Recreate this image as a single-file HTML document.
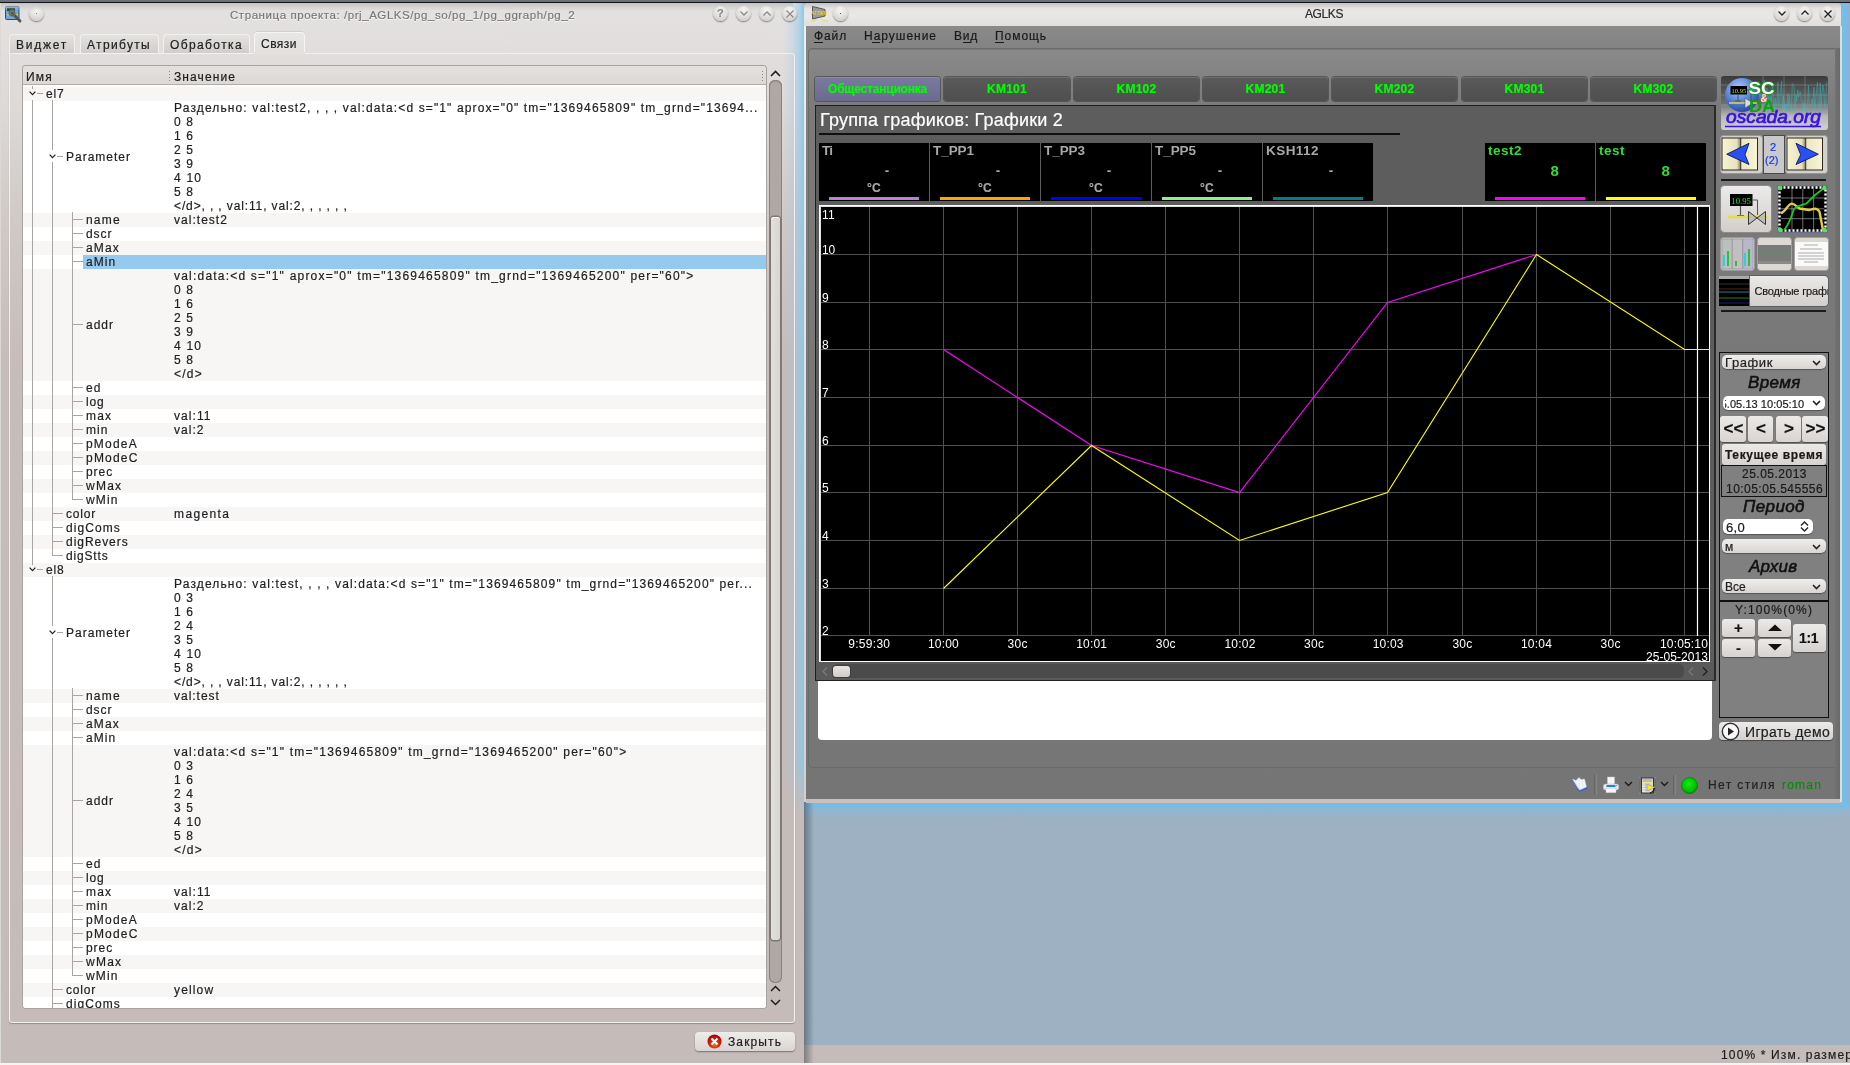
<!DOCTYPE html><html><head><meta charset="utf-8"><style>
*{box-sizing:border-box;margin:0;padding:0}
html,body{width:1850px;height:1065px;overflow:hidden;background:#9db1c2;font-family:"Liberation Sans",sans-serif;position:relative}
.a{position:absolute}
.t{position:absolute;white-space:pre;line-height:14px;font-size:12px;color:#1e1e1e;-webkit-text-stroke:0.2px currentColor}
.circ{position:absolute;width:15px;height:15px;border-radius:50%;background:radial-gradient(circle at 50% 30%,#f6f5f4 0%,#e2e0de 50%,#c4c0bc 100%);box-shadow:0 1px 1.5px rgba(0,0,0,.45)}
svg{position:absolute;overflow:visible}
</style></head><body><div id="root" style="position:absolute;left:0;top:0;width:1850px;height:1065px;will-change:transform">
<div class="a" style="left:0px;top:0px;width:1850px;height:2px;background:#6c7079"></div>
<div class="a" style="left:0px;top:2px;width:1850px;height:1px;background:#101214"></div>
<div class="a" style="left:804px;top:1045px;width:1046px;height:18px;background:#c5bcb9"></div>
<div class="a" style="left:0px;top:1063px;width:1850px;height:2px;background:#f4f4f4"></div>
<div class="t" style="left:1721px;top:1048px;font-size:12px;color:#1e1e1e;line-height:14px;letter-spacing:1.148px;">100% * Изм. размер</div>
<div class="a" style="left:1842px;top:3px;width:8px;height:800px;background:linear-gradient(90deg,#70c0ec,#88b4d6)"></div>
<div class="a" style="left:804px;top:803px;width:1046px;height:15px;background:linear-gradient(180deg,#70c0ec 0%,#8eb6d2 45%,#9db1c2 100%)"></div>
<div class="a" style="left:0px;top:3px;width:804px;height:1060px;background:linear-gradient(180deg,#e4e2e1 0px,#dddad8 100px,#d0c9c6 220px,#c6bdba 360px,#c5bcb9 100%);border-radius:4px 4px 0 0"></div>
<div class="a" style="left:0px;top:3px;width:1px;height:1060px;background:#dcd8d6"></div>
<div class="a" style="left:784px;top:3px;width:20px;height:812px;background:linear-gradient(90deg,rgba(140,200,235,0) 0%,rgba(140,200,235,.25) 45%,rgba(140,200,235,.6) 80%,#88c8ee 100%);-webkit-mask-image:linear-gradient(180deg,#000 0,#000 760px,transparent 812px)"></div>
<div class="a" style="left:794px;top:1045px;width:10px;height:18px;background:#c5bcb9"></div>
<div class="a" style="left:804px;top:802px;width:10px;height:261px;background:linear-gradient(90deg,rgba(40,50,60,.45),rgba(40,50,60,0))"></div>
<svg style="left:5px;top:6px" width="17" height="17" viewBox="0 0 17 17">
<rect x="0.5" y="0.5" width="13.5" height="13" rx="1" fill="#6fa6dc" stroke="#2a4e7a"/>
<rect x="2" y="2" width="8" height="3" fill="#0c3a10"/><rect x="2" y="8" width="11" height="1.5" fill="#c8c840"/>
<path d="M7 7 L15 15" stroke="#555" stroke-width="3" stroke-linecap="round"/>
<circle cx="7" cy="7" r="2.6" fill="none" stroke="#666" stroke-width="1.6"/>
</svg>
<div class="circ" style="left:29px;top:6px"></div>
<div class="a" style="left:36px;top:13px;width:1px;height:1px;background:#888"></div>
<div class="a" style="left:1px;top:3px;width:792px;height:8px;background:linear-gradient(180deg,#c4c4c4,rgba(232,230,229,0))"></div>
<div class="t" style="left:230px;top:7.5px;font-size:11.5px;color:#7a7777;line-height:14px;letter-spacing:0.563px;text-shadow:0 1px 1px #fff">Страница проекта: /prj_AGLKS/pg_so/pg_1/pg_ggraph/pg_2</div>
<div class="circ" style="left:713.0px;top:6px"></div>
<div class="t" style="left:717.0px;top:6px;font-size:11px;color:#8a8a8a;line-height:14px;font-weight:bold;">?</div>
<div class="circ" style="left:736.0px;top:6px"></div>
<svg style="left:739.5px;top:11px" width="8" height="5"><path d="M0.5 0.5 L4 4 L7.5 0.5" fill="none" stroke="#8a8a8a" stroke-width="1.3"/></svg>
<div class="circ" style="left:759.0px;top:6px"></div>
<svg style="left:762.5px;top:11px" width="8" height="5"><path d="M0.5 4.5 L4 1 L7.5 4.5" fill="none" stroke="#8a8a8a" stroke-width="1.3"/></svg>
<div class="circ" style="left:782.0px;top:6px"></div>
<svg style="left:785.5px;top:10px" width="8" height="8"><path d="M0.5 0.5 L7.5 7.5 M7.5 0.5 L0.5 7.5" fill="none" stroke="#8a8a8a" stroke-width="1.2"/></svg>
<div class="a" style="left:9px;top:34px;width:66px;height:20px;background:linear-gradient(180deg,#e4e2e0,#d0ccc9);border:1px solid #f2f0ef;border-bottom:none;border-radius:4px 4px 0 0"></div>
<div class="t" style="left:16px;top:38px;font-size:12px;color:#1e1e1e;line-height:14px;letter-spacing:1.747px;">Виджет</div>
<div class="a" style="left:80px;top:34px;width:79px;height:20px;background:linear-gradient(180deg,#e4e2e0,#d0ccc9);border:1px solid #f2f0ef;border-bottom:none;border-radius:4px 4px 0 0"></div>
<div class="t" style="left:87px;top:38px;font-size:12px;color:#1e1e1e;line-height:14px;letter-spacing:1.332px;">Атрибуты</div>
<div class="a" style="left:163px;top:34px;width:87px;height:20px;background:linear-gradient(180deg,#e4e2e0,#d0ccc9);border:1px solid #f2f0ef;border-bottom:none;border-radius:4px 4px 0 0"></div>
<div class="t" style="left:170px;top:38px;font-size:12px;color:#1e1e1e;line-height:14px;letter-spacing:1.387px;">Обработка</div>
<div class="a" style="left:254px;top:32px;width:51px;height:22px;background:linear-gradient(180deg,#e9e7e6,#e2dfdd);border:1px solid #f6f5f4;border-bottom:none;border-radius:4px 4px 0 0;box-shadow:0 -1px 0 rgba(0,0,0,.08)"></div>
<div class="t" style="left:261px;top:37px;font-size:12px;color:#1e1e1e;line-height:14px;letter-spacing:0.478px;">Связи</div>
<div class="a" style="left:9px;top:53px;width:786px;height:970px;border:1px solid #f3f1f0;border-radius:3px;box-shadow:0 1px 1px rgba(0,0,0,.25)"></div>
<div class="a" style="left:254px;top:52px;width:51px;height:3px;background:#e3e0de"></div>
<div class="a" style="left:23px;top:66px;width:743px;height:942px;background:#fff;border-radius:3px;box-shadow:0 0 0 1px #aaa4a0, inset 0 1px 1px rgba(0,0,0,.2)"></div>
<div class="a" style="left:23px;top:66px;width:743px;height:20px;background:linear-gradient(180deg,#e3e0de,#dcd8d5);border-radius:3px 3px 0 0;border-bottom:1px solid #fafafa;box-shadow:inset 0 -1px 0 #b4aeaa"></div>
<div class="t" style="left:26px;top:70px;font-size:12px;color:#1e1e1e;line-height:14px;letter-spacing:1.208px;">Имя</div>
<div class="t" style="left:174px;top:70px;font-size:12px;color:#1e1e1e;line-height:14px;letter-spacing:1.100px;">Значение</div>
<div class="a" style="left:169px;top:71px;width:1px;height:1px;background:#8a8683"></div>
<div class="a" style="left:762px;top:71px;width:1px;height:1px;background:#8a8683"></div>
<div class="a" style="left:169px;top:74px;width:1px;height:1px;background:#8a8683"></div>
<div class="a" style="left:762px;top:74px;width:1px;height:1px;background:#8a8683"></div>
<div class="a" style="left:169px;top:77px;width:1px;height:1px;background:#8a8683"></div>
<div class="a" style="left:762px;top:77px;width:1px;height:1px;background:#8a8683"></div>
<div class="a" style="left:169px;top:80px;width:1px;height:1px;background:#8a8683"></div>
<div class="a" style="left:762px;top:80px;width:1px;height:1px;background:#8a8683"></div>
<div class="a" style="left:23px;top:86px;width:743px;height:922px;overflow:hidden;border-radius:0 0 3px 3px">
<div class="a" style="left:0px;top:1px;width:743px;height:14px;background:#f7f6f5"></div>
<div class="a" style="left:0px;top:15px;width:743px;height:112px;background:#ffffff"></div>
<div class="a" style="left:0px;top:127px;width:743px;height:14px;background:#f7f6f5"></div>
<div class="a" style="left:0px;top:141px;width:743px;height:14px;background:#ffffff"></div>
<div class="a" style="left:0px;top:155px;width:743px;height:14px;background:#f7f6f5"></div>
<div class="a" style="left:0px;top:169px;width:743px;height:14px;background:#ffffff"></div>
<div class="a" style="left:60px;top:169px;width:683px;height:14px;background:#95c9ee"></div>
<div class="a" style="left:0px;top:183px;width:743px;height:112px;background:#f7f6f5"></div>
<div class="a" style="left:0px;top:295px;width:743px;height:14px;background:#ffffff"></div>
<div class="a" style="left:0px;top:309px;width:743px;height:14px;background:#f7f6f5"></div>
<div class="a" style="left:0px;top:323px;width:743px;height:14px;background:#ffffff"></div>
<div class="a" style="left:0px;top:337px;width:743px;height:14px;background:#f7f6f5"></div>
<div class="a" style="left:0px;top:351px;width:743px;height:14px;background:#ffffff"></div>
<div class="a" style="left:0px;top:365px;width:743px;height:14px;background:#f7f6f5"></div>
<div class="a" style="left:0px;top:379px;width:743px;height:14px;background:#ffffff"></div>
<div class="a" style="left:0px;top:393px;width:743px;height:14px;background:#f7f6f5"></div>
<div class="a" style="left:0px;top:407px;width:743px;height:14px;background:#ffffff"></div>
<div class="a" style="left:0px;top:421px;width:743px;height:14px;background:#f7f6f5"></div>
<div class="a" style="left:0px;top:435px;width:743px;height:14px;background:#ffffff"></div>
<div class="a" style="left:0px;top:449px;width:743px;height:14px;background:#f7f6f5"></div>
<div class="a" style="left:0px;top:463px;width:743px;height:14px;background:#ffffff"></div>
<div class="a" style="left:0px;top:477px;width:743px;height:14px;background:#f7f6f5"></div>
<div class="a" style="left:0px;top:491px;width:743px;height:112px;background:#ffffff"></div>
<div class="a" style="left:0px;top:603px;width:743px;height:14px;background:#f7f6f5"></div>
<div class="a" style="left:0px;top:617px;width:743px;height:14px;background:#ffffff"></div>
<div class="a" style="left:0px;top:631px;width:743px;height:14px;background:#f7f6f5"></div>
<div class="a" style="left:0px;top:645px;width:743px;height:14px;background:#ffffff"></div>
<div class="a" style="left:0px;top:659px;width:743px;height:112px;background:#f7f6f5"></div>
<div class="a" style="left:0px;top:771px;width:743px;height:14px;background:#ffffff"></div>
<div class="a" style="left:0px;top:785px;width:743px;height:14px;background:#f7f6f5"></div>
<div class="a" style="left:0px;top:799px;width:743px;height:14px;background:#ffffff"></div>
<div class="a" style="left:0px;top:813px;width:743px;height:14px;background:#f7f6f5"></div>
<div class="a" style="left:0px;top:827px;width:743px;height:14px;background:#ffffff"></div>
<div class="a" style="left:0px;top:841px;width:743px;height:14px;background:#f7f6f5"></div>
<div class="a" style="left:0px;top:855px;width:743px;height:14px;background:#ffffff"></div>
<div class="a" style="left:0px;top:869px;width:743px;height:14px;background:#f7f6f5"></div>
<div class="a" style="left:0px;top:883px;width:743px;height:14px;background:#ffffff"></div>
<div class="a" style="left:0px;top:897px;width:743px;height:14px;background:#f7f6f5"></div>
<div class="a" style="left:0px;top:911px;width:743px;height:14px;background:#ffffff"></div>
<div class="a" style="left:0px;top:925px;width:743px;height:14px;background:#f7f6f5"></div>
<div class="a" style="left:0px;top:939px;width:743px;height:14px;background:#ffffff"></div>
<div class="a" style="left:9px;top:14px;width:1px;height:465px;background:#aaa5a1"></div>
<div class="a" style="left:9px;top:0px;width:1px;height:3px;background:#aaa5a1"></div>
<div class="a" style="left:29px;top:14px;width:1px;height:456px;background:#aaa5a1"></div>
<div class="a" style="left:34px;top:70px;width:6px;height:1px;background:#aaa5a1"></div>
<div class="a" style="left:30px;top:427px;width:10px;height:1px;background:#aaa5a1"></div>
<div class="a" style="left:30px;top:441px;width:10px;height:1px;background:#aaa5a1"></div>
<div class="a" style="left:30px;top:455px;width:10px;height:1px;background:#aaa5a1"></div>
<div class="a" style="left:30px;top:469px;width:10px;height:1px;background:#aaa5a1"></div>
<div class="a" style="left:49px;top:126px;width:1px;height:288px;background:#aaa5a1"></div>
<div class="a" style="left:50px;top:133px;width:10px;height:1px;background:#aaa5a1"></div>
<div class="a" style="left:50px;top:147px;width:10px;height:1px;background:#aaa5a1"></div>
<div class="a" style="left:50px;top:161px;width:10px;height:1px;background:#aaa5a1"></div>
<div class="a" style="left:50px;top:175px;width:10px;height:1px;background:#aaa5a1"></div>
<div class="a" style="left:50px;top:238px;width:10px;height:1px;background:#aaa5a1"></div>
<div class="a" style="left:50px;top:301px;width:10px;height:1px;background:#aaa5a1"></div>
<div class="a" style="left:50px;top:315px;width:10px;height:1px;background:#aaa5a1"></div>
<div class="a" style="left:50px;top:329px;width:10px;height:1px;background:#aaa5a1"></div>
<div class="a" style="left:50px;top:343px;width:10px;height:1px;background:#aaa5a1"></div>
<div class="a" style="left:50px;top:357px;width:10px;height:1px;background:#aaa5a1"></div>
<div class="a" style="left:50px;top:371px;width:10px;height:1px;background:#aaa5a1"></div>
<div class="a" style="left:50px;top:385px;width:10px;height:1px;background:#aaa5a1"></div>
<div class="a" style="left:50px;top:399px;width:10px;height:1px;background:#aaa5a1"></div>
<div class="a" style="left:50px;top:413px;width:10px;height:1px;background:#aaa5a1"></div>
<div class="a" style="left:14px;top:7px;width:6px;height:1px;background:#aaa5a1"></div>
<div class="a" style="left:29px;top:490px;width:1px;height:456px;background:#aaa5a1"></div>
<div class="a" style="left:34px;top:546px;width:6px;height:1px;background:#aaa5a1"></div>
<div class="a" style="left:30px;top:903px;width:10px;height:1px;background:#aaa5a1"></div>
<div class="a" style="left:30px;top:917px;width:10px;height:1px;background:#aaa5a1"></div>
<div class="a" style="left:30px;top:931px;width:10px;height:1px;background:#aaa5a1"></div>
<div class="a" style="left:30px;top:945px;width:10px;height:1px;background:#aaa5a1"></div>
<div class="a" style="left:49px;top:602px;width:1px;height:288px;background:#aaa5a1"></div>
<div class="a" style="left:50px;top:609px;width:10px;height:1px;background:#aaa5a1"></div>
<div class="a" style="left:50px;top:623px;width:10px;height:1px;background:#aaa5a1"></div>
<div class="a" style="left:50px;top:637px;width:10px;height:1px;background:#aaa5a1"></div>
<div class="a" style="left:50px;top:651px;width:10px;height:1px;background:#aaa5a1"></div>
<div class="a" style="left:50px;top:714px;width:10px;height:1px;background:#aaa5a1"></div>
<div class="a" style="left:50px;top:777px;width:10px;height:1px;background:#aaa5a1"></div>
<div class="a" style="left:50px;top:791px;width:10px;height:1px;background:#aaa5a1"></div>
<div class="a" style="left:50px;top:805px;width:10px;height:1px;background:#aaa5a1"></div>
<div class="a" style="left:50px;top:819px;width:10px;height:1px;background:#aaa5a1"></div>
<div class="a" style="left:50px;top:833px;width:10px;height:1px;background:#aaa5a1"></div>
<div class="a" style="left:50px;top:847px;width:10px;height:1px;background:#aaa5a1"></div>
<div class="a" style="left:50px;top:861px;width:10px;height:1px;background:#aaa5a1"></div>
<div class="a" style="left:50px;top:875px;width:10px;height:1px;background:#aaa5a1"></div>
<div class="a" style="left:50px;top:889px;width:10px;height:1px;background:#aaa5a1"></div>
<div class="a" style="left:14px;top:483px;width:6px;height:1px;background:#aaa5a1"></div>
<svg style="left:6px;top:5px" width="8" height="5"><path d="M0.6 0.6 L3.5 3.6 L6.4 0.6" fill="none" stroke="#222" stroke-width="1.25"/></svg>
<div class="t" style="left:23px;top:1px;font-size:12px;color:#1e1e1e;letter-spacing:0.8541666666666662px">el7</div>
<div class="a" style="left:29px;top:64px;width:1px;height:12px;background:#fff"></div>
<svg style="left:26px;top:68px" width="8" height="5"><path d="M0.6 0.6 L3.5 3.6 L6.4 0.6" fill="none" stroke="#222" stroke-width="1.25"/></svg>
<div class="t" style="left:43px;top:64px;font-size:12px;color:#1e1e1e;letter-spacing:0.9958333333333328px">Parameter</div>
<div class="t" style="left:151px;top:15px;font-size:12px;color:#1e1e1e;letter-spacing:1.1261439606741577px">Раздельно: val:test2, , , , val:data:&lt;d s="1" aprox="0" tm="1369465809" tm_grnd="13694...</div>
<div class="t" style="left:151px;top:29px;font-size:12px;color:#1e1e1e;letter-spacing:1.1503593750000005px">0 8</div>
<div class="t" style="left:151px;top:43px;font-size:12px;color:#1e1e1e;letter-spacing:1.1503593750000005px">1 6</div>
<div class="t" style="left:151px;top:57px;font-size:12px;color:#1e1e1e;letter-spacing:1.1503593750000005px">2 5</div>
<div class="t" style="left:151px;top:71px;font-size:12px;color:#1e1e1e;letter-spacing:1.1503593750000005px">3 9</div>
<div class="t" style="left:151px;top:85px;font-size:12px;color:#1e1e1e;letter-spacing:1.2080390625000004px">4 10</div>
<div class="t" style="left:151px;top:99px;font-size:12px;color:#1e1e1e;letter-spacing:1.1503593750000005px">5 8</div>
<div class="t" style="left:151px;top:113px;font-size:12px;color:#1e1e1e;letter-spacing:0.8750886948529415px">&lt;/d&gt;, , , val:11, val:2, , , , , ,</div>
<div class="t" style="left:63px;top:127px;font-size:12px;color:#1e1e1e;letter-spacing:1.2006249999999994px">name</div>
<div class="t" style="left:151px;top:127px;font-size:12px;color:#1e1e1e;letter-spacing:1.0274531250000003px">val:test2</div>
<div class="t" style="left:63px;top:141px;font-size:12px;color:#1e1e1e;letter-spacing:0.9068749999999995px">dscr</div>
<div class="t" style="left:63px;top:155px;font-size:12px;color:#1e1e1e;letter-spacing:1.1737499999999994px">aMax</div>
<div class="t" style="left:63px;top:169px;font-size:12px;color:#1e1e1e;letter-spacing:1.0406249999999995px">aMin</div>
<div class="t" style="left:63px;top:232px;font-size:12px;color:#1e1e1e;letter-spacing:0.9606249999999995px">addr</div>
<div class="t" style="left:151px;top:183px;font-size:12px;color:#1e1e1e;letter-spacing:1.2063344594594598px">val:data:&lt;d s="1" aprox="0" tm="1369465809" tm_grnd="1369465200" per="60"&gt;</div>
<div class="t" style="left:151px;top:197px;font-size:12px;color:#1e1e1e;letter-spacing:1.1503593750000005px">0 8</div>
<div class="t" style="left:151px;top:211px;font-size:12px;color:#1e1e1e;letter-spacing:1.1503593750000005px">1 6</div>
<div class="t" style="left:151px;top:225px;font-size:12px;color:#1e1e1e;letter-spacing:1.1503593750000005px">2 5</div>
<div class="t" style="left:151px;top:239px;font-size:12px;color:#1e1e1e;letter-spacing:1.1503593750000005px">3 9</div>
<div class="t" style="left:151px;top:253px;font-size:12px;color:#1e1e1e;letter-spacing:1.2080390625000004px">4 10</div>
<div class="t" style="left:151px;top:267px;font-size:12px;color:#1e1e1e;letter-spacing:1.1503593750000005px">5 8</div>
<div class="t" style="left:151px;top:281px;font-size:12px;color:#1e1e1e;letter-spacing:1.2436171875000004px">&lt;/d&gt;</div>
<div class="t" style="left:63px;top:295px;font-size:12px;color:#1e1e1e;letter-spacing:1.0674999999999994px">ed</div>
<div class="t" style="left:63px;top:309px;font-size:12px;color:#1e1e1e;letter-spacing:0.8541666666666662px">log</div>
<div class="t" style="left:63px;top:323px;font-size:12px;color:#1e1e1e;letter-spacing:1.209166666666666px">max</div>
<div class="t" style="left:151px;top:323px;font-size:12px;color:#1e1e1e;letter-spacing:1.0738125000000005px">val:11</div>
<div class="t" style="left:63px;top:337px;font-size:12px;color:#1e1e1e;letter-spacing:1.031666666666666px">min</div>
<div class="t" style="left:151px;top:337px;font-size:12px;color:#1e1e1e;letter-spacing:1.0492312500000005px">val:2</div>
<div class="t" style="left:63px;top:351px;font-size:12px;color:#1e1e1e;letter-spacing:1.1916666666666662px">pModeA</div>
<div class="t" style="left:63px;top:365px;font-size:12px;color:#1e1e1e;letter-spacing:1.2095833333333328px">pModeC</div>
<div class="t" style="left:63px;top:379px;font-size:12px;color:#1e1e1e;letter-spacing:0.9337499999999995px">prec</div>
<div class="t" style="left:63px;top:393px;font-size:12px;color:#1e1e1e;letter-spacing:1.2537499999999995px">wMax</div>
<div class="t" style="left:63px;top:407px;font-size:12px;color:#1e1e1e;letter-spacing:1.1206249999999995px">wMin</div>
<div class="t" style="left:43px;top:421px;font-size:12px;color:#1e1e1e;letter-spacing:0.8324999999999996px">color</div>
<div class="t" style="left:151px;top:421px;font-size:12px;color:#1e1e1e;letter-spacing:1.3806160714285718px">magenta</div>
<div class="t" style="left:43px;top:435px;font-size:12px;color:#1e1e1e;letter-spacing:1.0824999999999994px">digComs</div>
<div class="t" style="left:43px;top:449px;font-size:12px;color:#1e1e1e;letter-spacing:0.9605555555555552px">digRevers</div>
<div class="t" style="left:43px;top:463px;font-size:12px;color:#1e1e1e;letter-spacing:0.8382142857142852px">digStts</div>
<svg style="left:6px;top:481px" width="8" height="5"><path d="M0.6 0.6 L3.5 3.6 L6.4 0.6" fill="none" stroke="#222" stroke-width="1.25"/></svg>
<div class="t" style="left:23px;top:477px;font-size:12px;color:#1e1e1e;letter-spacing:0.8541666666666662px">el8</div>
<div class="a" style="left:29px;top:540px;width:1px;height:12px;background:#fff"></div>
<svg style="left:26px;top:544px" width="8" height="5"><path d="M0.6 0.6 L3.5 3.6 L6.4 0.6" fill="none" stroke="#222" stroke-width="1.25"/></svg>
<div class="t" style="left:43px;top:540px;font-size:12px;color:#1e1e1e;letter-spacing:0.9958333333333328px">Parameter</div>
<div class="t" style="left:151px;top:491px;font-size:12px;color:#1e1e1e;letter-spacing:1.128135298295455px">Раздельно: val:test, , , , val:data:&lt;d s="1" tm="1369465809" tm_grnd="1369465200" per...</div>
<div class="t" style="left:151px;top:505px;font-size:12px;color:#1e1e1e;letter-spacing:1.1503593750000005px">0 3</div>
<div class="t" style="left:151px;top:519px;font-size:12px;color:#1e1e1e;letter-spacing:1.1503593750000005px">1 6</div>
<div class="t" style="left:151px;top:533px;font-size:12px;color:#1e1e1e;letter-spacing:1.1503593750000005px">2 4</div>
<div class="t" style="left:151px;top:547px;font-size:12px;color:#1e1e1e;letter-spacing:1.1503593750000005px">3 5</div>
<div class="t" style="left:151px;top:561px;font-size:12px;color:#1e1e1e;letter-spacing:1.2080390625000004px">4 10</div>
<div class="t" style="left:151px;top:575px;font-size:12px;color:#1e1e1e;letter-spacing:1.1503593750000005px">5 8</div>
<div class="t" style="left:151px;top:589px;font-size:12px;color:#1e1e1e;letter-spacing:0.8750886948529415px">&lt;/d&gt;, , , val:11, val:2, , , , , ,</div>
<div class="t" style="left:63px;top:603px;font-size:12px;color:#1e1e1e;letter-spacing:1.2006249999999994px">name</div>
<div class="t" style="left:151px;top:603px;font-size:12px;color:#1e1e1e;letter-spacing:0.9832500000000004px">val:test</div>
<div class="t" style="left:63px;top:617px;font-size:12px;color:#1e1e1e;letter-spacing:0.9068749999999995px">dscr</div>
<div class="t" style="left:63px;top:631px;font-size:12px;color:#1e1e1e;letter-spacing:1.1737499999999994px">aMax</div>
<div class="t" style="left:63px;top:645px;font-size:12px;color:#1e1e1e;letter-spacing:1.0406249999999995px">aMin</div>
<div class="t" style="left:63px;top:708px;font-size:12px;color:#1e1e1e;letter-spacing:0.9606249999999995px">addr</div>
<div class="t" style="left:151px;top:659px;font-size:12px;color:#1e1e1e;letter-spacing:1.2151142578125005px">val:data:&lt;d s="1" tm="1369465809" tm_grnd="1369465200" per="60"&gt;</div>
<div class="t" style="left:151px;top:673px;font-size:12px;color:#1e1e1e;letter-spacing:1.1503593750000005px">0 3</div>
<div class="t" style="left:151px;top:687px;font-size:12px;color:#1e1e1e;letter-spacing:1.1503593750000005px">1 6</div>
<div class="t" style="left:151px;top:701px;font-size:12px;color:#1e1e1e;letter-spacing:1.1503593750000005px">2 4</div>
<div class="t" style="left:151px;top:715px;font-size:12px;color:#1e1e1e;letter-spacing:1.1503593750000005px">3 5</div>
<div class="t" style="left:151px;top:729px;font-size:12px;color:#1e1e1e;letter-spacing:1.2080390625000004px">4 10</div>
<div class="t" style="left:151px;top:743px;font-size:12px;color:#1e1e1e;letter-spacing:1.1503593750000005px">5 8</div>
<div class="t" style="left:151px;top:757px;font-size:12px;color:#1e1e1e;letter-spacing:1.2436171875000004px">&lt;/d&gt;</div>
<div class="t" style="left:63px;top:771px;font-size:12px;color:#1e1e1e;letter-spacing:1.0674999999999994px">ed</div>
<div class="t" style="left:63px;top:785px;font-size:12px;color:#1e1e1e;letter-spacing:0.8541666666666662px">log</div>
<div class="t" style="left:63px;top:799px;font-size:12px;color:#1e1e1e;letter-spacing:1.209166666666666px">max</div>
<div class="t" style="left:151px;top:799px;font-size:12px;color:#1e1e1e;letter-spacing:1.0738125000000005px">val:11</div>
<div class="t" style="left:63px;top:813px;font-size:12px;color:#1e1e1e;letter-spacing:1.031666666666666px">min</div>
<div class="t" style="left:151px;top:813px;font-size:12px;color:#1e1e1e;letter-spacing:1.0492312500000005px">val:2</div>
<div class="t" style="left:63px;top:827px;font-size:12px;color:#1e1e1e;letter-spacing:1.1916666666666662px">pModeA</div>
<div class="t" style="left:63px;top:841px;font-size:12px;color:#1e1e1e;letter-spacing:1.2095833333333328px">pModeC</div>
<div class="t" style="left:63px;top:855px;font-size:12px;color:#1e1e1e;letter-spacing:0.9337499999999995px">prec</div>
<div class="t" style="left:63px;top:869px;font-size:12px;color:#1e1e1e;letter-spacing:1.2537499999999995px">wMax</div>
<div class="t" style="left:63px;top:883px;font-size:12px;color:#1e1e1e;letter-spacing:1.1206249999999995px">wMin</div>
<div class="t" style="left:43px;top:897px;font-size:12px;color:#1e1e1e;letter-spacing:0.8324999999999996px">color</div>
<div class="t" style="left:151px;top:897px;font-size:12px;color:#1e1e1e;letter-spacing:1.1508984375000004px">yellow</div>
<div class="t" style="left:43px;top:911px;font-size:12px;color:#1e1e1e;letter-spacing:1.0824999999999994px">digComs</div>
<div class="t" style="left:43px;top:925px;font-size:12px;color:#1e1e1e;letter-spacing:0.9605555555555552px">digRevers</div>
<div class="t" style="left:43px;top:939px;font-size:12px;color:#1e1e1e;letter-spacing:0.8382142857142852px">digStts</div>
</div>
<svg style="left:770px;top:70px" width="11" height="7"><path d="M1 6 L5.5 1.5 L10 6" fill="none" stroke="#1e1e1e" stroke-width="1.6"/></svg>
<div class="a" style="left:769px;top:80px;width:13px;height:903px;background:#b0a8a5;border-radius:6px;box-shadow:inset 0 0 0 1px #8a8380, inset 0 1px 2px rgba(0,0,0,.25)"></div>
<div class="a" style="left:771px;top:217px;width:9px;height:723px;background:linear-gradient(90deg,#e2dfdc,#dedad7 50%,#d8d4d1);border-radius:3px;box-shadow:0 0 0 1.5px #7e7774, inset 0 1px 0 #fff"></div>
<svg style="left:770px;top:985px" width="11" height="7"><path d="M1 6 L5.5 1.5 L10 6" fill="none" stroke="#1e1e1e" stroke-width="1.5"/></svg>
<svg style="left:770px;top:999px" width="11" height="7"><path d="M1 1 L5.5 5.5 L10 1" fill="none" stroke="#1e1e1e" stroke-width="1.5"/></svg>
<div class="a" style="left:695px;top:1032px;width:100px;height:19px;background:linear-gradient(180deg,#eeecea,#d9d5d2);border-radius:4px;box-shadow:0 1px 1.5px rgba(0,0,0,.4)"></div>
<svg style="left:707px;top:1034px" width="15" height="15" viewBox="0 0 15 15">
<defs><radialGradient id="rg1" cx="50%" cy="70%" r="60%"><stop offset="0" stop-color="#f07a10"/><stop offset=".6" stop-color="#d42010"/><stop offset="1" stop-color="#a80808"/></radialGradient></defs>
<circle cx="7.5" cy="7.5" r="7" fill="url(#rg1)"/><path d="M4.5 4.5 L10.5 10.5 M10.5 4.5 L4.5 10.5" stroke="#fff" stroke-width="2"/></svg>
<div class="t" style="left:728px;top:1035px;font-size:12px;color:#1e1e1e;line-height:14px;letter-spacing:1.112px;">Закрыть</div>
<div class="a" style="left:804px;top:3px;width:1037px;height:799px;background:#c5bcb9;border-radius:4px 4px 0 0"></div>
<div class="a" style="left:804px;top:3px;width:1037px;height:24px;background:linear-gradient(180deg,#c4c4c4 0px,#e6e5e4 6px,#e9e8e7 12px,#e0dedc 100%);border-radius:4px 4px 0 0"></div>
<svg style="left:811px;top:5px" width="18" height="17" viewBox="0 0 18 17">
<path d="M1.5 1.5 L14 4.5 L14 11 L1.5 14 Z" fill="#9a9a9a" stroke="#555" stroke-width="1"/>
<text x="0" y="10" font-family="Liberation Sans" font-size="5" fill="#e8d020" font-weight="bold">AГЛКС</text>
<path d="M0 16 L4 16 L5 14 M11 14 L12 16 L17 16" stroke="#e8e040" fill="none" stroke-width="1"/>
</svg>
<div class="circ" style="left:833px;top:6px"></div>
<div class="a" style="left:840px;top:13px;width:1px;height:1px;background:#555"></div>
<div class="t" style="left:1305px;top:7px;font-size:12px;color:#2a2a2a;line-height:14px;letter-spacing:-0.400px;">AGLKS</div>
<div class="circ" style="left:1774.0px;top:6px"></div>
<svg style="left:1777.5px;top:11px" width="8" height="5"><path d="M0.5 0.5 L4 4 L7.5 0.5" fill="none" stroke="#222" stroke-width="1.3"/></svg>
<div class="circ" style="left:1797.0px;top:6px"></div>
<svg style="left:1800.5px;top:10px" width="8" height="5"><path d="M0.5 4.5 L4 1 L7.5 4.5" fill="none" stroke="#222" stroke-width="1.3"/></svg>
<div class="circ" style="left:1820.0px;top:6px"></div>
<svg style="left:1823.5px;top:9.5px" width="8" height="8"><path d="M0.5 0.5 L7.5 7.5 M7.5 0.5 L0.5 7.5" fill="none" stroke="#222" stroke-width="1.3"/></svg>
<div class="a" style="left:806px;top:26px;width:1034px;height:773px;background:linear-gradient(180deg,#888888 0px,#828282 60px,#777777 400px,#757575 100%)"></div>
<div class="a" style="left:804px;top:26px;width:2px;height:776px;background:linear-gradient(180deg,#f2eeec,#d6cecb)"></div>
<div class="a" style="left:806px;top:26px;width:1034px;height:22px;background:linear-gradient(180deg,#8a8a8a,#838383)"></div>
<div class="t" style="left:814px;top:29px;font-size:12px;color:#1a1a1a;line-height:14px;letter-spacing:0.875px;">Файл</div>
<div class="a" style="left:814px;top:42px;width:9px;height:1px;background:#1a1a1a"></div>
<div class="t" style="left:864px;top:29px;font-size:12px;color:#1a1a1a;line-height:14px;letter-spacing:0.981px;">Нарушение</div>
<div class="a" style="left:872px;top:42px;width:8px;height:1px;background:#1a1a1a"></div>
<div class="t" style="left:954px;top:29px;font-size:12px;color:#1a1a1a;line-height:14px;letter-spacing:0.766px;">Вид</div>
<div class="a" style="left:963px;top:42px;width:8px;height:1px;background:#1a1a1a"></div>
<div class="t" style="left:995px;top:29px;font-size:12px;color:#1a1a1a;line-height:14px;letter-spacing:0.943px;">Помощь</div>
<div class="a" style="left:995px;top:42px;width:9px;height:1px;background:#1a1a1a"></div>
<div class="a" style="left:808px;top:48px;width:1030px;height:720px;background:linear-gradient(180deg,#8a8a8a 0px,#848484 22px,#7a7a7a 60px,#767676 100%);border-radius:4px;border:1px solid #6a6a6a;box-shadow:inset 0 1px 0 #7a7a7a"></div>
<div class="a" style="left:815px;top:77px;width:125px;height:24px;background:linear-gradient(180deg,#7a7aa0,#6c6a90);border-radius:3px;box-shadow:0 0 0 1px rgba(60,60,60,.6), inset 0 1px 0 rgba(255,255,255,.12)"></div>
<div class="t" style="left:828.0px;top:82px;font-size:12px;color:#00ff00;line-height:14px;letter-spacing:-0.203px;font-weight:bold;">Общестанционка</div>
<div class="a" style="left:944px;top:77px;width:126px;height:24px;background:linear-gradient(180deg,#5a5a5a,#4e4e4e);border-radius:3px;box-shadow:0 0 0 1px rgba(60,60,60,.6), inset 0 1px 0 rgba(255,255,255,.12)"></div>
<div class="t" style="left:987.0px;top:82px;font-size:12px;color:#00ff00;line-height:14px;letter-spacing:0.263px;font-weight:bold;">KM101</div>
<div class="a" style="left:1074px;top:77px;width:125px;height:24px;background:linear-gradient(180deg,#5a5a5a,#4e4e4e);border-radius:3px;box-shadow:0 0 0 1px rgba(60,60,60,.6), inset 0 1px 0 rgba(255,255,255,.12)"></div>
<div class="t" style="left:1116.5px;top:82px;font-size:12px;color:#00ff00;line-height:14px;letter-spacing:0.263px;font-weight:bold;">KM102</div>
<div class="a" style="left:1203px;top:77px;width:125px;height:24px;background:linear-gradient(180deg,#5a5a5a,#4e4e4e);border-radius:3px;box-shadow:0 0 0 1px rgba(60,60,60,.6), inset 0 1px 0 rgba(255,255,255,.12)"></div>
<div class="t" style="left:1245.5px;top:82px;font-size:12px;color:#00ff00;line-height:14px;letter-spacing:0.263px;font-weight:bold;">KM201</div>
<div class="a" style="left:1332px;top:77px;width:125px;height:24px;background:linear-gradient(180deg,#5a5a5a,#4e4e4e);border-radius:3px;box-shadow:0 0 0 1px rgba(60,60,60,.6), inset 0 1px 0 rgba(255,255,255,.12)"></div>
<div class="t" style="left:1374.5px;top:82px;font-size:12px;color:#00ff00;line-height:14px;letter-spacing:0.263px;font-weight:bold;">KM202</div>
<div class="a" style="left:1462px;top:77px;width:125px;height:24px;background:linear-gradient(180deg,#5a5a5a,#4e4e4e);border-radius:3px;box-shadow:0 0 0 1px rgba(60,60,60,.6), inset 0 1px 0 rgba(255,255,255,.12)"></div>
<div class="t" style="left:1504.5px;top:82px;font-size:12px;color:#00ff00;line-height:14px;letter-spacing:0.263px;font-weight:bold;">KM301</div>
<div class="a" style="left:1591px;top:77px;width:125px;height:24px;background:linear-gradient(180deg,#5a5a5a,#4e4e4e);border-radius:3px;box-shadow:0 0 0 1px rgba(60,60,60,.6), inset 0 1px 0 rgba(255,255,255,.12)"></div>
<div class="t" style="left:1633.5px;top:82px;font-size:12px;color:#00ff00;line-height:14px;letter-spacing:0.263px;font-weight:bold;">KM302</div>
<div class="a" style="left:815px;top:105px;width:900px;height:576px;background:#5d5d5d;box-shadow:inset 0 0 0 1px #1e1e1e"></div>
<div class="t" style="left:820px;top:110px;font-size:18px;color:#ffffff;line-height:20px;letter-spacing:0.201px;">Группа графиков: Графики 2</div>
<div class="a" style="left:819px;top:133px;width:581px;height:2px;background:#101010"></div>
<div class="a" style="left:819px;top:143px;width:110px;height:58px;background:#000"></div>
<div class="t" style="left:822px;top:143.5px;font-size:13.5px;color:#a8a8a8;line-height:14px;letter-spacing:-0.875px;font-weight:bold;-webkit-text-stroke:0">Ti</div>
<div class="t" style="left:885px;top:164px;font-size:12px;color:#a8a8a8;line-height:14px;font-weight:bold;">-</div>
<div class="t" style="left:867px;top:181px;font-size:12px;color:#a8a8a8;line-height:14px;letter-spacing:0.266px;font-weight:bold;">°C</div>
<div class="a" style="left:829px;top:197px;width:90px;height:3px;background:#bb80d8"></div>
<div class="a" style="left:930px;top:143px;width:110px;height:58px;background:#000"></div>
<div class="t" style="left:933px;top:143.5px;font-size:13.5px;color:#a8a8a8;line-height:14px;letter-spacing:-0.056px;font-weight:bold;-webkit-text-stroke:0">T_PP1</div>
<div class="t" style="left:996px;top:164px;font-size:12px;color:#a8a8a8;line-height:14px;font-weight:bold;">-</div>
<div class="t" style="left:978px;top:181px;font-size:12px;color:#a8a8a8;line-height:14px;letter-spacing:0.266px;font-weight:bold;">°C</div>
<div class="a" style="left:940px;top:197px;width:90px;height:3px;background:#ffa500"></div>
<div class="a" style="left:1041px;top:143px;width:110px;height:58px;background:#000"></div>
<div class="t" style="left:1044px;top:143.5px;font-size:13.5px;color:#a8a8a8;line-height:14px;letter-spacing:-0.056px;font-weight:bold;-webkit-text-stroke:0">T_PP3</div>
<div class="t" style="left:1107px;top:164px;font-size:12px;color:#a8a8a8;line-height:14px;font-weight:bold;">-</div>
<div class="t" style="left:1089px;top:181px;font-size:12px;color:#a8a8a8;line-height:14px;letter-spacing:0.266px;font-weight:bold;">°C</div>
<div class="a" style="left:1051px;top:197px;width:90px;height:3px;background:#0000ff"></div>
<div class="a" style="left:1152px;top:143px;width:110px;height:58px;background:#000"></div>
<div class="t" style="left:1155px;top:143.5px;font-size:13.5px;color:#a8a8a8;line-height:14px;letter-spacing:-0.056px;font-weight:bold;-webkit-text-stroke:0">T_PP5</div>
<div class="t" style="left:1218px;top:164px;font-size:12px;color:#a8a8a8;line-height:14px;font-weight:bold;">-</div>
<div class="t" style="left:1200px;top:181px;font-size:12px;color:#a8a8a8;line-height:14px;letter-spacing:0.266px;font-weight:bold;">°C</div>
<div class="a" style="left:1162px;top:197px;width:90px;height:3px;background:#90ee90"></div>
<div class="a" style="left:1263px;top:143px;width:110px;height:58px;background:#000"></div>
<div class="t" style="left:1266px;top:143.5px;font-size:13.5px;color:#a8a8a8;line-height:14px;letter-spacing:0.451px;font-weight:bold;-webkit-text-stroke:0">KSH112</div>
<div class="t" style="left:1329px;top:164px;font-size:12px;color:#a8a8a8;line-height:14px;font-weight:bold;">-</div>
<div class="a" style="left:1273px;top:197px;width:90px;height:3px;background:#008080"></div>
<div class="a" style="left:1485px;top:143px;width:110px;height:58px;background:#000"></div>
<div class="t" style="left:1488px;top:143.5px;font-size:13.5px;color:#33dd33;line-height:14px;letter-spacing:0.491px;font-weight:bold;-webkit-text-stroke:0">test2</div>
<div class="t" style="left:1550.5px;top:163px;font-size:15px;color:#33dd33;line-height:16px;font-weight:bold;-webkit-text-stroke:0">8</div>
<div class="a" style="left:1495px;top:197px;width:90px;height:3px;background:#ff00ff"></div>
<div class="a" style="left:1596px;top:143px;width:110px;height:58px;background:#000"></div>
<div class="t" style="left:1599px;top:143.5px;font-size:13.5px;color:#33dd33;line-height:14px;letter-spacing:0.492px;font-weight:bold;-webkit-text-stroke:0">test</div>
<div class="t" style="left:1661.5px;top:163px;font-size:15px;color:#33dd33;line-height:16px;font-weight:bold;-webkit-text-stroke:0">8</div>
<div class="a" style="left:1606px;top:197px;width:90px;height:3px;background:#ffff00"></div>
<div class="a" style="left:819px;top:205px;width:891px;height:457px;background:#000;box-shadow:inset 1px 1px 0 #fff, inset 2px 2px 0 #e0e0e0, inset -1px -1px 0 #fff"></div>
<div class="a" style="left:0;top:0;width:1850px;height:1065px;overflow:hidden;pointer-events:none"><svg style="left:0;top:0" width="1850" height="1065" viewBox="0 0 1850 1065"><line x1="869.5" y1="207" x2="869.5" y2="636" stroke="#505050" stroke-width="1"/><line x1="943.5" y1="207" x2="943.5" y2="636" stroke="#505050" stroke-width="1"/><line x1="1017.5" y1="207" x2="1017.5" y2="636" stroke="#505050" stroke-width="1"/><line x1="1091.5" y1="207" x2="1091.5" y2="636" stroke="#505050" stroke-width="1"/><line x1="1165.5" y1="207" x2="1165.5" y2="636" stroke="#505050" stroke-width="1"/><line x1="1239.5" y1="207" x2="1239.5" y2="636" stroke="#505050" stroke-width="1"/><line x1="1313.5" y1="207" x2="1313.5" y2="636" stroke="#505050" stroke-width="1"/><line x1="1387.5" y1="207" x2="1387.5" y2="636" stroke="#505050" stroke-width="1"/><line x1="1462.5" y1="207" x2="1462.5" y2="636" stroke="#505050" stroke-width="1"/><line x1="1536.5" y1="207" x2="1536.5" y2="636" stroke="#505050" stroke-width="1"/><line x1="1610.5" y1="207" x2="1610.5" y2="636" stroke="#505050" stroke-width="1"/><line x1="1684.5" y1="207" x2="1684.5" y2="636" stroke="#505050" stroke-width="1"/><line x1="821" y1="635.5" x2="1709" y2="635.5" stroke="#505050" stroke-width="1"/><line x1="821" y1="588.5" x2="1709" y2="588.5" stroke="#505050" stroke-width="1"/><line x1="821" y1="540.5" x2="1709" y2="540.5" stroke="#505050" stroke-width="1"/><line x1="821" y1="492.5" x2="1709" y2="492.5" stroke="#505050" stroke-width="1"/><line x1="821" y1="445.5" x2="1709" y2="445.5" stroke="#505050" stroke-width="1"/><line x1="821" y1="397.5" x2="1709" y2="397.5" stroke="#505050" stroke-width="1"/><line x1="821" y1="349.5" x2="1709" y2="349.5" stroke="#505050" stroke-width="1"/><line x1="821" y1="302.5" x2="1709" y2="302.5" stroke="#505050" stroke-width="1"/><line x1="821" y1="254.5" x2="1709" y2="254.5" stroke="#505050" stroke-width="1"/><line x1="1697.5" y1="207" x2="1697.5" y2="636" stroke="#fff" stroke-width="1.2"/><polyline points="943.5,349.5 1091.5,445.5 1239.5,492.5 1387.5,302.5 1536.5,254.5" fill="none" stroke="#ff00ff" stroke-width="1.1"/><polyline points="943.5,588.5 1091.5,445.5 1239.5,540.5 1387.5,492.5 1536.5,254.5 1684.5,349.5 1709,349.5" fill="none" stroke="#ffff00" stroke-width="1.1"/></svg></div>
<div class="t" style="left:822px;top:623.5px;font-size:12px;color:#fff;line-height:14px;letter-spacing:-0.172px;-webkit-text-stroke:0">2</div>
<div class="t" style="left:822px;top:576.5px;font-size:12px;color:#fff;line-height:14px;letter-spacing:-0.172px;-webkit-text-stroke:0">3</div>
<div class="t" style="left:822px;top:528.5px;font-size:12px;color:#fff;line-height:14px;letter-spacing:-0.172px;-webkit-text-stroke:0">4</div>
<div class="t" style="left:822px;top:480.5px;font-size:12px;color:#fff;line-height:14px;letter-spacing:-0.172px;-webkit-text-stroke:0">5</div>
<div class="t" style="left:822px;top:433.5px;font-size:12px;color:#fff;line-height:14px;letter-spacing:-0.172px;-webkit-text-stroke:0">6</div>
<div class="t" style="left:822px;top:385.5px;font-size:12px;color:#fff;line-height:14px;letter-spacing:-0.172px;-webkit-text-stroke:0">7</div>
<div class="t" style="left:822px;top:337.5px;font-size:12px;color:#fff;line-height:14px;letter-spacing:-0.172px;-webkit-text-stroke:0">8</div>
<div class="t" style="left:822px;top:290.5px;font-size:12px;color:#fff;line-height:14px;letter-spacing:-0.172px;-webkit-text-stroke:0">9</div>
<div class="t" style="left:822px;top:242.5px;font-size:12px;color:#fff;line-height:14px;letter-spacing:-0.172px;-webkit-text-stroke:0">10</div>
<div class="t" style="left:822px;top:208px;font-size:12px;color:#fff;line-height:14px;letter-spacing:0.273px;-webkit-text-stroke:0">11</div>
<div class="t" style="left:848.3px;top:637px;font-size:12px;color:#fff;line-height:14px;letter-spacing:0.283px;-webkit-text-stroke:0">9:59:30</div>
<div class="t" style="left:927.9px;top:637px;font-size:12px;color:#fff;line-height:14px;letter-spacing:0.197px;-webkit-text-stroke:0">10:00</div>
<div class="t" style="left:1007.6px;top:637px;font-size:12px;color:#fff;line-height:14px;letter-spacing:0.219px;-webkit-text-stroke:0">30c</div>
<div class="t" style="left:1076.2px;top:637px;font-size:12px;color:#fff;line-height:14px;letter-spacing:0.197px;-webkit-text-stroke:0">10:01</div>
<div class="t" style="left:1155.8px;top:637px;font-size:12px;color:#fff;line-height:14px;letter-spacing:0.219px;-webkit-text-stroke:0">30c</div>
<div class="t" style="left:1224.5px;top:637px;font-size:12px;color:#fff;line-height:14px;letter-spacing:0.197px;-webkit-text-stroke:0">10:02</div>
<div class="t" style="left:1304.1px;top:637px;font-size:12px;color:#fff;line-height:14px;letter-spacing:0.219px;-webkit-text-stroke:0">30c</div>
<div class="t" style="left:1372.7px;top:637px;font-size:12px;color:#fff;line-height:14px;letter-spacing:0.197px;-webkit-text-stroke:0">10:03</div>
<div class="t" style="left:1452.4px;top:637px;font-size:12px;color:#fff;line-height:14px;letter-spacing:0.219px;-webkit-text-stroke:0">30c</div>
<div class="t" style="left:1521.0px;top:637px;font-size:12px;color:#fff;line-height:14px;letter-spacing:0.197px;-webkit-text-stroke:0">10:04</div>
<div class="t" style="left:1600.6px;top:637px;font-size:12px;color:#fff;line-height:14px;letter-spacing:0.219px;-webkit-text-stroke:0">30c</div>
<div class="t" style="left:1660px;top:637px;font-size:12px;color:#fff;line-height:14px;letter-spacing:0.164px;-webkit-text-stroke:0">10:05:10</div>
<div class="t" style="left:1646px;top:650px;font-size:12px;color:#fff;line-height:14px;letter-spacing:0.062px;-webkit-text-stroke:0">25-05-2013</div>
<div class="a" style="left:816px;top:662px;width:898px;height:18px;background:#5a5a5a"></div>
<div class="a" style="left:833px;top:664px;width:851px;height:14px;background:#4b4b4b;border-radius:5px"></div>
<div class="a" style="left:833px;top:666px;width:17px;height:11px;background:linear-gradient(180deg,#e8e6e4,#cfcbc8);border-radius:3px;box-shadow:0 0 0 1px #3e3e3e"></div>
<svg style="left:822px;top:667px" width="6" height="9"><path d="M5 0.5 L1 4.5 L5 8.5" fill="none" stroke="#7a7a7a" stroke-width="1.3"/></svg>
<svg style="left:1688px;top:667px" width="6" height="9"><path d="M5 0.5 L1 4.5 L5 8.5" fill="none" stroke="#777" stroke-width="1.3"/></svg>
<svg style="left:1702px;top:667px" width="6" height="9"><path d="M1 0.5 L5 4.5 L1 8.5" fill="none" stroke="#222" stroke-width="1.3"/></svg>
<div class="a" style="left:815px;top:680px;width:900px;height:1px;background:#222"></div>
<div class="a" style="left:818px;top:681px;width:894px;height:59px;background:#fff;border-radius:0 0 4px 4px"></div>
<div class="a" style="left:1714px;top:105px;width:2px;height:576px;background:#2a2a2a"></div>
<svg style="left:1721px;top:76px" width="107" height="54" viewBox="0 0 107 54">
<defs>
<linearGradient id="lg" x1="0" y1="0" x2="0" y2="1"><stop offset="0" stop-color="#3a3a3a"/><stop offset=".5" stop-color="#6a6e6e"/><stop offset=".75" stop-color="#b8baba"/><stop offset="1" stop-color="#d0d0d0"/></linearGradient>
<radialGradient id="glb" cx="40%" cy="30%" r="70%"><stop offset="0" stop-color="#b0c8f4"/><stop offset=".55" stop-color="#5a86d8"/><stop offset="1" stop-color="#2a4ca8"/></radialGradient>
</defs>
<rect x="0" y="0" width="107" height="54" rx="3" fill="url(#lg)"/>
<path d="M0 9 H107 M0 19 H107 M0 29 H107 M0 39 H107 M42 0 V54 M63 0 V54 M84 0 V54" stroke="#b0b4b4" stroke-width=".5" opacity=".7"/>
<polyline points="38.0,12.1 38.9,22.5 39.8,16.6 40.7,24.5 41.6,25.3 42.5,6.2 43.4,4.4 44.3,32.5 45.2,12.8 46.1,12.0 47.0,37.9 47.9,20.0 48.8,32.4 49.7,20.2 50.6,25.7 51.5,9.1 52.4,25.6 53.3,33.5 54.2,21.8 55.1,29.2 56.0,26.8 56.9,6.2 57.8,29.8 58.7,24.1 59.6,14.2 60.5,5.1 61.4,33.4 62.3,20.1 63.2,28.4 64.1,33.9 65.0,28.3 65.9,35.3 66.8,17.4 67.7,31.2 68.6,19.1 69.5,35.8 70.4,33.9 71.3,7.3 72.2,8.6 73.1,11.4 74.0,36.8 74.9,18.8 75.8,25.3 76.7,14.2 77.6,21.2 78.5,17.1 79.4,15.9 80.3,23.9 81.2,23.9 82.1,34.7 83.0,27.2 83.9,35.6 84.8,33.1 85.7,37.7 86.6,26.8 87.5,9.5 88.4,33.3 89.3,36.8 90.2,34.8 91.1,23.3 92.0,28.3 92.9,11.2 93.8,32.3 94.7,23.5 95.6,13.7 96.5,6.2 97.4,33.0 98.3,37.7 99.2,7.0 100.1,31.2 101.0,18.0 101.9,9.1 102.8,14.0 103.7,30.1 104.6,33.7 105.5,5.5" fill="none" stroke="#30c0c0" stroke-width=".6" opacity=".7"/>
<circle cx="21" cy="19" r="17" fill="url(#glb)"/>
<rect x="9.5" y="10" width="16.5" height="8.5" fill="#000"/><text x="10.5" y="16.8" font-size="6.5" fill="#b0e040" font-family="Liberation Serif">10.95</text>
<path d="M17 18.5 V25 M14 25 H20 M26 14 H30 V26" stroke="#444" stroke-width=".8" fill="none"/>
<path d="M8 27 H36" stroke="#e0d040" stroke-width="1.6"/>
<path d="M24 22 L32 27 L24 32 Z" fill="#d8dce8" stroke="#555" stroke-width=".6"/>
<text x="27.5" y="18" font-size="17" font-weight="bold" font-family="Liberation Sans" fill="#ffffff" stroke="#10a010" stroke-width="1.6" paint-order="stroke" textLength="26" lengthAdjust="spacingAndGlyphs">SC</text>
<text x="39.5" y="26" font-size="10" font-weight="bold" font-family="Liberation Sans" fill="#ffe0d0" stroke="#d07050" stroke-width=".5" paint-order="stroke">&amp;</text>
<text x="28" y="36" font-size="17" font-weight="bold" font-family="Liberation Sans" fill="#10a010" textLength="26" lengthAdjust="spacingAndGlyphs">DA</text>
<text x="5" y="47" font-size="17.5" font-style="italic" font-family="Liberation Sans" fill="#3a10e8" stroke="#3a10e8" stroke-width=".7" textLength="95" lengthAdjust="spacingAndGlyphs">oscada.org</text>
<path d="M4 50.5 H100" stroke="#3a10e8" stroke-width="1.6"/>
</svg>
<svg style="left:1720px;top:135px" width="43" height="39" viewBox="0 0 43 39">
<defs><linearGradient id="bk1720" x1="0" y1="0" x2="1" y2="0"><stop offset="0" stop-color="#f8f4d4"/><stop offset=".42" stop-color="#e8e2bc"/><stop offset=".5" stop-color="#9a9478"/><stop offset=".52" stop-color="#4a4638"/><stop offset=".56" stop-color="#ece6c4"/><stop offset="1" stop-color="#f8f4d4"/></linearGradient></defs>
<rect x="0.5" y="0.5" width="42" height="38" rx="3" fill="#d4d0cc" stroke="#9a9692"/>
<rect x="2" y="3" width="35.5" height="32" fill="url(#bk1720)" stroke="#2a2820" stroke-width="1"/>
<path d="M6.7 19.2 L29 8.3 L25 19.7 L29 29.5 Z" fill="#2a50f0" stroke="#0a1a60" stroke-width=".9"/>
</svg>
<svg style="left:1785px;top:135px" width="43" height="39" viewBox="0 0 43 39">
<defs><linearGradient id="bk1785" x1="0" y1="0" x2="1" y2="0"><stop offset="0" stop-color="#f8f4d4"/><stop offset=".42" stop-color="#e8e2bc"/><stop offset=".5" stop-color="#9a9478"/><stop offset=".52" stop-color="#4a4638"/><stop offset=".56" stop-color="#ece6c4"/><stop offset="1" stop-color="#f8f4d4"/></linearGradient></defs>
<rect x="0.5" y="0.5" width="42" height="38" rx="3" fill="#d4d0cc" stroke="#9a9692"/>
<rect x="2" y="3" width="35.5" height="32" fill="url(#bk1785)" stroke="#2a2820" stroke-width="1"/>
<path d="M33.3 19.2 L11 8.3 L15.7 19.7 L11 29.5 Z" fill="#2a50f0" stroke="#0a1a60" stroke-width=".9"/>
</svg>
<div class="a" style="left:1763px;top:135px;width:22px;height:39px;background:#c9c9c9;border:1px solid #4a4a4a"></div>
<div class="t" style="left:1770px;top:141px;font-size:11px;color:#1a3ae0;line-height:13px;">2</div>
<div class="t" style="left:1765px;top:154px;font-size:11px;color:#1a3ae0;line-height:13px;">(2)</div>
<div class="a" style="left:1721px;top:179px;width:105px;height:2px;background:#1a1a1a"></div>
<svg style="left:1720px;top:185px" width="52" height="48" viewBox="0 0 52 48">
<defs><linearGradient id="ib1" x1="0" y1="0" x2="0" y2="1"><stop offset="0" stop-color="#ecebea"/><stop offset="1" stop-color="#d2cecb"/></linearGradient></defs>
<rect x="0.5" y="0.5" width="51" height="47" rx="4" fill="url(#ib1)" stroke="#8e8a86"/>
<rect x="10" y="9" width="22.5" height="12" fill="#000"/><text x="11.3" y="18.6" font-size="8.6" fill="#30e030" font-family="Liberation Serif" textLength="19.5" lengthAdjust="spacingAndGlyphs">10.95</text>
<path d="M32.5 15 H37.5 V30" stroke="#555" stroke-width="1" fill="none"/>
<path d="M20.5 21 V30 M17 30.5 H24" stroke="#555" stroke-width="1.2" fill="none"/>
<path d="M8 32 H48" stroke="#e4e040" stroke-width="2.6"/>
<path d="M28.5 26.5 L28.5 39.5 L37 33 Z M45.5 26.5 L45.5 39.5 L37 33 Z" fill="#b4b4b4" fill-opacity=".7" stroke="#333" stroke-width="1"/>
</svg>
<svg style="left:1777px;top:185px" width="51" height="48" viewBox="0 0 51 48">
<rect x="0" y="0" width="51" height="48" rx="2" fill="#6e6e90"/>
<rect x="2.5" y="2.5" width="46" height="43" fill="#000" stroke="#111" stroke-width="2.4"/><rect x="2.5" y="2.5" width="46" height="43" fill="none" stroke="#fff" stroke-width="2.4" stroke-dasharray="2 2"/>
<path d="M15 4 V45 M25.8 4 V45 M36.6 4 V45 M4 13 H47 M4 23.8 H47 M4 33.7 H47" stroke="#a0a0a0" stroke-width=".7"/>
<path d="M4 28 C8 27 10 21 13.5 19 C17 17 19 22 22.5 23.5 L32 25 C36 24 40 22 42.5 27 L46 45" fill="none" stroke="#e4cc40" stroke-width="2.4"/>
<path d="M7 45 C12 40 15 30 17 24 C19 21 24 20 29.5 18.5 C33 15 37 10 47 3" fill="none" stroke="#18c828" stroke-width="1.8"/>
<circle cx="3.2" cy="3" r="2.3" fill="#58e058"/><circle cx="47.5" cy="3" r="2.3" fill="#58e058"/><circle cx="3.2" cy="45" r="2.3" fill="#58e058"/><circle cx="47.5" cy="45" r="2.3" fill="#58e058"/>
</svg>
<svg style="left:1720px;top:237px" width="35" height="34" viewBox="0 0 35 34">
<rect x="0.5" y="0.5" width="34" height="33" rx="3" fill="#c8c8c8" stroke="#9a9a9a"/>
<rect x="2" y="2" width="10" height="30" fill="#b8c0c0" stroke="#888" stroke-width=".5"/><rect x="12.5" y="2" width="10" height="30" fill="#c0c0c0" stroke="#888" stroke-width=".5"/><rect x="23" y="2" width="10" height="30" fill="#b8b8c8" stroke="#a080c0" stroke-width=".5"/>
<rect x="3" y="18" width="2" height="11" fill="#30d0e0"/><rect x="7" y="14" width="2" height="15" fill="#30c030"/><rect x="15" y="24" width="2" height="5" fill="#30c030"/><rect x="24" y="16" width="2" height="13" fill="#30d0e0"/><rect x="28" y="12" width="2" height="17" fill="#30c030"/>
</svg>
<svg style="left:1757px;top:237px" width="35" height="34" viewBox="0 0 35 34">
<rect x="0.5" y="0.5" width="34" height="33" rx="3" fill="#dcd8d4" stroke="#a4a09c"/>
<rect x="1" y="8" width="33" height="16" fill="#7a7a7a"/><path d="M2 16 L16 16 M18 16 L33 16" stroke="#40a040" stroke-width="1" stroke-dasharray="1.5 1"/>
<rect x="1" y="24" width="33" height="3" fill="#8a8a8a"/>
</svg>
<svg style="left:1794px;top:237px" width="35" height="34" viewBox="0 0 35 34">
<rect x="0.5" y="0.5" width="34" height="33" rx="3" fill="#dcd8d4" stroke="#a4a09c"/>
<rect x="1" y="5" width="33" height="24" fill="#fafafa"/>
<path d="M10 8 H24 M6 12 H28 M4 16 H30 M4 19 H30 M4 22 H30 M10 25 H24" stroke="#888" stroke-width=".7"/>
</svg>
<svg style="left:1719px;top:276px" width="32" height="30" viewBox="0 0 32 30">
<rect x="0" y="0" width="32" height="30" fill="#000"/><rect x="0" y="0" width="32" height="3" fill="#aaa"/>
<path d="M0 8 H32" stroke="#333"/><path d="M0 13 H32" stroke="#603020" stroke-width=".8"/><path d="M0 16 H32" stroke="#30a0c0" stroke-width=".8"/><path d="M0 22 H32" stroke="#30a030" stroke-width=".8"/><path d="M0 27 H32" stroke="#2020a0" stroke-width=".8"/>
</svg>
<div class="a" style="left:1750px;top:276px;width:78px;height:30px;background:linear-gradient(180deg,#eceae8,#d2cecb);border-radius:0 4px 4px 0;box-shadow:0 0 0 1px #5e5e5e"></div>
<div class="a" style="left:1751px;top:276px;width:77px;height:30px;overflow:hidden"><div class="t" style="left:3.5px;top:8px;font-size:11px;color:#1a1a1a;letter-spacing:-0.18px">Сводные графики</div></div>
<div class="a" style="left:1721px;top:310px;width:105px;height:2px;background:#1a1a1a"></div>
<div class="a" style="left:1719px;top:352px;width:110px;height:366px;background:#808080;border:1px solid #101010"></div>
<div class="a" style="left:1722px;top:355px;width:104px;height:14px;background:linear-gradient(180deg,#f0eeec,#d8d4d1);border-radius:5px;box-shadow:0 1px 1px rgba(0,0,0,.35)"></div>
<div class="a" style="left:1722px;top:355px;width:88px;height:14px;overflow:hidden"><div class="t" style="left:3px;top:1.0px;font-size:13px;color:#222;letter-spacing:0.60px;">График</div></div>
<svg style="left:1812px;top:359.5px" width="9" height="6"><path d="M1 1 L4.5 4.5 L8 1" fill="none" stroke="#222" stroke-width="1.6"/></svg>
<div class="t" style="left:1748px;top:374px;font-size:17px;color:#111;line-height:18px;letter-spacing:0.372px;font-style:italic;-webkit-text-stroke:0.55px #111">Время</div>
<div class="a" style="left:1723px;top:396px;width:102px;height:14px;background:#fff;border-radius:5px;box-shadow:0 1px 1px rgba(0,0,0,.35)"></div>
<div class="a" style="left:1725px;top:396px;width:81px;height:14px;overflow:hidden"><div class="t" style="left:-10.5px;top:0.5px;font-size:11px;color:#1a1a1a;letter-spacing:0.05px">25.05.13 10:05:10</div></div>
<svg style="left:1812px;top:400px" width="9" height="6"><path d="M1 1 L4.5 4.5 L8 1" fill="none" stroke="#222" stroke-width="1.6"/></svg>
<div class="a" style="left:1720px;top:416px;width:26px;height:26px;background:linear-gradient(180deg,#eceae8,#d8d4d1);border-radius:3px;box-shadow:0 1px 1px rgba(0,0,0,.4)"></div>
<div class="t" style="left:1723.578125px;top:420px;font-size:17px;color:#111;line-height:18px;font-weight:bold;">&lt;&lt;</div>
<div class="a" style="left:1748px;top:416px;width:25px;height:26px;background:linear-gradient(180deg,#eceae8,#d8d4d1);border-radius:3px;box-shadow:0 1px 1px rgba(0,0,0,.4)"></div>
<div class="t" style="left:1756.0390625px;top:420px;font-size:17px;color:#111;line-height:18px;font-weight:bold;">&lt;</div>
<div class="a" style="left:1776px;top:416px;width:25px;height:26px;background:linear-gradient(180deg,#eceae8,#d8d4d1);border-radius:3px;box-shadow:0 1px 1px rgba(0,0,0,.4)"></div>
<div class="t" style="left:1784.0390625px;top:420px;font-size:17px;color:#111;line-height:18px;font-weight:bold;">&gt;</div>
<div class="a" style="left:1802px;top:416px;width:26px;height:26px;background:linear-gradient(180deg,#eceae8,#d8d4d1);border-radius:3px;box-shadow:0 1px 1px rgba(0,0,0,.4)"></div>
<div class="t" style="left:1805.578125px;top:420px;font-size:17px;color:#111;line-height:18px;font-weight:bold;">&gt;&gt;</div>
<div class="a" style="left:1722px;top:444px;width:104px;height:21px;background:linear-gradient(180deg,#eceae8,#d6d2cf);border-radius:3px;box-shadow:0 1px 1px rgba(0,0,0,.4)"></div>
<div class="t" style="left:1725px;top:448px;font-size:12px;color:#1a1a1a;line-height:14px;letter-spacing:0.618px;font-weight:bold;">Текущее время</div>
<div class="a" style="left:1721px;top:465px;width:106px;height:32px;background:#808080;border:1px solid #101010"></div>
<div class="t" style="left:1742px;top:467px;font-size:12px;color:#1a1a1a;line-height:14px;letter-spacing:0.497px;">25.05.2013</div>
<div class="t" style="left:1726px;top:482px;font-size:12px;color:#1a1a1a;line-height:14px;letter-spacing:0.464px;">10:05:05.545556</div>
<div class="t" style="left:1743px;top:498px;font-size:17px;color:#111;line-height:18px;letter-spacing:0.396px;font-style:italic;-webkit-text-stroke:0.55px #111">Период</div>
<div class="a" style="left:1723px;top:519px;width:90px;height:15px;background:#fff;border-radius:5px;box-shadow:0 1px 1px rgba(0,0,0,.35)"></div>
<div class="t" style="left:1726px;top:521px;font-size:13px;color:#1a1a1a;line-height:14px;letter-spacing:0.307px;">6,0</div>
<svg style="left:1800px;top:521px" width="9" height="11"><path d="M1 4.5 L4.5 1 L8 4.5 M1 6.5 L4.5 10 L8 6.5" fill="none" stroke="#222" stroke-width="1.4"/></svg>
<div class="a" style="left:1722px;top:539px;width:104px;height:14px;background:linear-gradient(180deg,#f0eeec,#d8d4d1);border-radius:5px;box-shadow:0 1px 1px rgba(0,0,0,.35)"></div>
<div class="a" style="left:1722px;top:539px;width:88px;height:14px;overflow:hidden"><div class="t" style="left:3px;top:1.0px;font-size:12px;color:#222;">м</div></div>
<svg style="left:1812px;top:543.5px" width="9" height="6"><path d="M1 1 L4.5 4.5 L8 1" fill="none" stroke="#222" stroke-width="1.6"/></svg>
<div class="t" style="left:1749px;top:558px;font-size:17px;color:#111;line-height:18px;letter-spacing:0.272px;font-style:italic;-webkit-text-stroke:0.55px #111">Архив</div>
<div class="a" style="left:1722px;top:579px;width:104px;height:14px;background:linear-gradient(180deg,#f0eeec,#d8d4d1);border-radius:5px;box-shadow:0 1px 1px rgba(0,0,0,.35)"></div>
<div class="a" style="left:1722px;top:579px;width:88px;height:14px;overflow:hidden"><div class="t" style="left:3px;top:1.0px;font-size:12px;color:#222;">Все</div></div>
<svg style="left:1812px;top:583.5px" width="9" height="6"><path d="M1 1 L4.5 4.5 L8 1" fill="none" stroke="#222" stroke-width="1.6"/></svg>
<div class="a" style="left:1719px;top:600px;width:110px;height:2px;background:#101010"></div>
<div class="t" style="left:1735px;top:603px;font-size:12px;color:#1a1a1a;line-height:14px;letter-spacing:1.130px;">Y:100%(0%)</div>
<div class="a" style="left:1722px;top:619px;width:33px;height:18px;background:linear-gradient(180deg,#eceae8,#d6d2cf);border-radius:3px;box-shadow:0 1px 1px rgba(0,0,0,.4)"></div>
<div class="t" style="left:1734.1171875px;top:621px;font-size:15px;color:#111;line-height:14px;font-weight:bold;">+</div>
<div class="a" style="left:1758px;top:619px;width:33px;height:18px;background:linear-gradient(180deg,#eceae8,#d6d2cf);border-radius:3px;box-shadow:0 1px 1px rgba(0,0,0,.4)"></div>
<svg style="left:1767px;top:624px" width="16" height="7"><path d="M1 7 L8 0.5 L15 7 Z" fill="#111"/></svg>
<div class="a" style="left:1722px;top:639px;width:33px;height:18px;background:linear-gradient(180deg,#eceae8,#d6d2cf);border-radius:3px;box-shadow:0 1px 1px rgba(0,0,0,.4)"></div>
<div class="t" style="left:1736.0px;top:641px;font-size:15px;color:#111;line-height:14px;font-weight:bold;">-</div>
<div class="a" style="left:1758px;top:639px;width:33px;height:18px;background:linear-gradient(180deg,#eceae8,#d6d2cf);border-radius:3px;box-shadow:0 1px 1px rgba(0,0,0,.4)"></div>
<svg style="left:1767px;top:644px" width="16" height="8"><path d="M1 0 L8 6.5 L15 0 Z" fill="#111"/></svg>
<div class="a" style="left:1793px;top:624px;width:33px;height:28px;background:linear-gradient(180deg,#eceae8,#d6d2cf);border-radius:3px;box-shadow:0 1px 1px rgba(0,0,0,.4)"></div>
<div class="t" style="left:1799px;top:631px;font-size:14px;color:#111;line-height:14px;letter-spacing:-0.406px;font-weight:bold;">1:1</div>
<div class="a" style="left:1719px;top:722px;width:114px;height:18px;background:linear-gradient(180deg,#eceae8,#d4d0cd);border-radius:4px;box-shadow:0 1px 1px rgba(0,0,0,.4)"></div>
<svg style="left:1721px;top:722px" width="19" height="19" viewBox="0 0 19 19"><circle cx="9.5" cy="9.5" r="8.2" fill="#f8f8f8" stroke="#333" stroke-width="1.4"/><path d="M7 5.5 L13 9.5 L7 13.5 Z" fill="#222"/></svg>
<div class="t" style="left:1745px;top:723.5px;font-size:14px;color:#222;line-height:16px;letter-spacing:0.330px;">Играть демо</div>
<div class="a" style="left:806px;top:769px;width:1034px;height:30px;background:#757575"></div>
<svg style="left:1571px;top:777px" width="17" height="16" viewBox="0 0 17 16">
<defs><linearGradient id="bkc" x1="0" y1="0" x2="1" y2="1"><stop offset="0" stop-color="#9ab8f0"/><stop offset="1" stop-color="#2a50b0"/></linearGradient></defs>
<path d="M0.5 1.5 L8 14.5 L16.5 11.5 L15 9 Z" fill="url(#bkc)" stroke="#3060c0" stroke-width=".6"/>
<path d="M1.5 2 L5 3.5 L8 0.5 L10 2.5 L13.5 2 L15.5 10 L8.5 13 Z" fill="#f4f6fa" stroke="#c0cce0" stroke-width=".5"/>
<path d="M8 1 L8.5 12.5 M4 5 L7 11 M11 3 L12 10" stroke="#d0d8e8" stroke-width=".5"/>
</svg>
<div class="a" style="left:1594px;top:775px;width:1px;height:20px;background:#666"></div>
<div class="a" style="left:1596px;top:775px;width:1px;height:20px;background:#868686"></div>
<svg style="left:1603px;top:777px" width="16" height="16" viewBox="0 0 16 16">
<rect x="4.5" y="0" width="7" height="8" fill="#f6f6f8" stroke="#c8c8d0" stroke-width=".5"/>
<rect x="0.3" y="7" width="15.4" height="6" rx="2" fill="#e8e8ec" stroke="#b0b0b8" stroke-width=".5"/>
<rect x="3.5" y="8" width="9" height="2" fill="#1a80ff"/>
<rect x="3" y="11.5" width="10" height="4.2" fill="#fafafa" stroke="#c0c0c0" stroke-width=".4"/>
<circle cx="13.5" cy="8.6" r=".6" fill="#4a8"/>
</svg>
<svg style="left:1624px;top:781px" width="9" height="6"><path d="M1 1 L4.5 4.5 L8 1" fill="none" stroke="#1a1a1a" stroke-width="1.4"/></svg>
<svg style="left:1639px;top:777px" width="17" height="17" viewBox="0 0 17 17">
<rect x="2.5" y="1" width="12" height="15" fill="#e8e8e8" stroke="#333" stroke-width="1"/>
<rect x="3.5" y="2" width="10" height="3" fill="#bbb"/>
<rect x="3.5" y="5.5" width="10" height="1.2" fill="#f0e040"/>
<path d="M3.5 8 H13.5 M3.5 10.5 H13.5 M3.5 13 H13.5 M7 6 V15 M10 6 V15" stroke="#aaa" stroke-width=".6"/>
<path d="M8 7 L16 10.5 L8 14 Z" fill="#f4e820" stroke="#888" stroke-width=".5"/>
<path d="M11 16 Q15 15 15.5 11" fill="none" stroke="#222" stroke-width="1.4"/>
<path d="M0.5 0.5 V16.5 H16.5 V0.5 Z" fill="none" stroke="#3a6a3a" stroke-width=".6" stroke-dasharray="1 1.5"/>
<circle cx="0.8" cy="0.8" r=".8" fill="#50c050"/><circle cx="16.2" cy="0.8" r=".8" fill="#50c050"/><circle cx="0.8" cy="16.2" r=".8" fill="#50c050"/><circle cx="16.2" cy="16.2" r=".8" fill="#50c050"/>
</svg>
<svg style="left:1660px;top:781px" width="9" height="6"><path d="M1 1 L4.5 4.5 L8 1" fill="none" stroke="#1a1a1a" stroke-width="1.4"/></svg>
<div class="a" style="left:1673px;top:775px;width:1px;height:20px;background:#666"></div>
<div class="a" style="left:1675px;top:775px;width:1px;height:20px;background:#868686"></div>
<svg style="left:1681px;top:777px" width="17" height="17" viewBox="0 0 17 17"><defs><radialGradient id="gg" cx="45%" cy="40%" r="60%"><stop offset="0" stop-color="#10f010"/><stop offset=".75" stop-color="#00c000"/><stop offset="1" stop-color="#009000"/></radialGradient></defs><circle cx="8.5" cy="8.5" r="8" fill="url(#gg)" stroke="#067006" stroke-width=".6"/></svg>
<div class="t" style="left:1708px;top:778px;font-size:12px;color:#222;line-height:14px;letter-spacing:1.391px;">Нет стиля</div>
<div class="t" style="left:1782px;top:778px;font-size:12px;color:#0a8c0a;line-height:14px;letter-spacing:1.197px;">roman</div>
<div class="a" style="left:806px;top:799px;width:1035px;height:4px;background:#c8c0bd"></div>
<div class="a" style="left:1835px;top:48px;width:5px;height:751px;background:linear-gradient(90deg,#727272,#6a6a6a)"></div>
<div class="a" style="left:1840px;top:26px;width:2px;height:776px;background:#e0dad8"></div>
</div></body></html>
